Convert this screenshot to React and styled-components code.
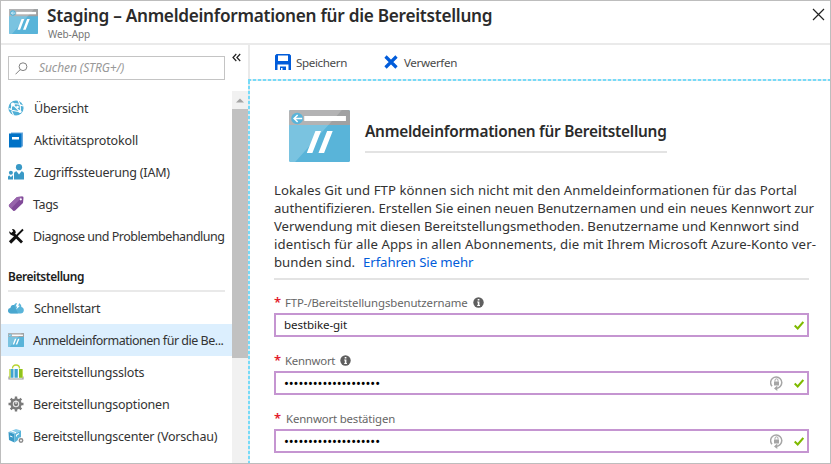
import React from 'react';
import styled, { createGlobalStyle, css } from 'styled-components';

const GlobalStyle = createGlobalStyle`
  *, *::before, *::after { box-sizing: border-box; }
  body { margin: 0; background: #fff; overflow: hidden; }
`;

const Blade = styled.div`
  display: flex;
  flex-direction: column;
  width: 831px;
  height: 464px;
  overflow: hidden;
  border: 1px solid #bdbdbd;
  background: #fff;
  color: #333;
  font-family: "Noto Sans", "Open Sans", sans-serif;
`;

const Header = styled.header`
  display: flex;
  flex: none;
  height: 44px;
  padding: 8px 5px 0 8px;
  border-bottom: 2px solid #eaeaea;
  > svg { flex: none; }
`;

const HeaderText = styled.div`
  flex: 1;
  margin: -4px 0 0 9px;
`;

const Title = styled.h1`
  margin: 0;
  font-size: 17.2px;
  font-weight: 600;
  line-height: 22px;
  letter-spacing: -0.27px;
  color: #2b2b2b;
  white-space: nowrap;
`;

const Subtitle = styled.div`
  margin: 0 0 0 1px;
  font-size: 10px;
  line-height: 14px;
  letter-spacing: -0.1px;
  color: #757575;
`;

const CloseButton = styled.button`
  display: flex;
  align-self: flex-start;
  margin-top: -1px;
  padding: 0;
  border: 0;
  background: none;
`;

const Body = styled.div`
  display: flex;
  flex: 1;
  min-height: 0;
`;

const Sidebar = styled.nav`
  display: grid;
  flex: none;
  grid-template-columns: 231px 16px;
  grid-template-rows: 47px 1fr;
  width: 247px;
`;

const SearchBox = styled.div`
  display: flex;
  align-items: center;
  width: 217px;
  height: 24px;
  margin: 11px 0 0 7px;
  padding-left: 6px;
  border: 1.5px solid #c4c4c4;
  font-size: 12px;
  font-style: italic;
`;

const SearchText = styled.span`
  margin: -2px 0 0 11px;
  letter-spacing: -0.1px;
  color: #999;
`;

const Collapse = styled.button`
  display: flex;
  align-self: start;
  margin-top: 8px;
  padding: 0;
  border: 0;
  background: none;
`;

const Menu = styled.div`
  min-width: 0;
  overflow: hidden;
`;

const MenuItem = styled.div`
  display: flex;
  align-items: center;
  height: 32px;
  padding-left: 7px;
  background: ${(p) => (p.$active ? '#dceffe' : 'transparent')};
  > svg { flex: none; }
`;

const MenuLabel = styled.span`
  margin-left: ${(p) => p.$gap}px;
  font-size: 12.5px;
  letter-spacing: ${(p) => p.$track}px;
  color: #333;
  white-space: nowrap;
`;

const SectionTitle = styled.h2`
  width: 217px;
  height: 40px;
  margin: 0 0 0 7px;
  padding-top: 16px;
  border-bottom: 2px solid #e9e9e9;
  font-size: 11.9px;
  font-weight: 600;
  line-height: 16px;
  letter-spacing: -0.42px;
  color: #1c1c1c;
`;

const ScrollTrack = styled.div`
  display: flex;
  flex-direction: column;
  margin-top: -1px;
  background: #f1f1f1;
`;

const ScrollArrow = styled.div`
  display: flex;
  align-items: center;
  justify-content: center;
  height: 18px;
`;

const ScrollThumb = styled.div`
  height: 249px;
  background: #c1c1c1;
`;

const Main = styled.main`
  display: flex;
  flex: 1;
  flex-direction: column;
  min-width: 0;
`;

const Toolbar = styled.div`
  display: flex;
  flex: none;
  align-items: center;
  height: 34px;
  padding-left: 25px;
  border-left: 2px solid #eaeaea;
`;

const Command = styled.button`
  display: flex;
  align-items: center;
  gap: ${(p) => p.$gap}px;
  width: 109px;
  padding: 0;
  border: 0;
  background: none;
  color: #4a4a4a;
  font-family: inherit;
  font-size: 11.6px;
  letter-spacing: -0.36px;
`;

const dash = css`#76dbf8 0 3px, #dcebf1 3px 5px`;

const DottedTop = styled.div`
  flex: none;
  height: 2px;
  background: repeating-linear-gradient(90deg, ${dash});
`;

const Panel = styled.section`
  display: flex;
  flex: 1;
  min-height: 0;
`;

const DottedSide = styled.div`
  flex: none;
  width: 2px;
  background: repeating-linear-gradient(180deg, ${dash});
`;

const Content = styled.div`
  flex: none;
  width: 560px;
  padding: 29px 0 0 24px;
`;

const Hero = styled.div`
  display: flex;
  height: 52px;
  padding-left: 15px;
`;

const HeroTitle = styled.h2`
  width: 302px;
  height: 35px;
  margin: 8px 0 0 15px;
  border-bottom: 2px solid #e3e3e3;
  font-size: 15.4px;
  font-weight: 600;
  line-height: 27px;
  letter-spacing: -0.26px;
  color: #2b2b2b;
  white-space: nowrap;
`;

const Paragraph = styled.div`
  width: 535px;
  height: 118px;
  padding-top: 19px;
  border-bottom: 2px solid #e3e3e3;
`;

const Line = styled.div`
  height: 18px;
  font-size: 13.2px;
  line-height: 18px;
  letter-spacing: ${(p) => p.$track}px;
  white-space: pre;
`;

const Link = styled.a`
  margin-left: 8px;
  letter-spacing: -0.1px;
  color: #015cda;
`;

const Form = styled.form`
  margin-top: 11px;
`;

const Field = styled.div`
  width: 535px;
  height: 58px;
`;

const FieldLabel = styled.div`
  display: flex;
  align-items: center;
  height: 22px;
  font-size: 11.4px;
  letter-spacing: ${(p) => p.$track}px;
  color: #666;
  > svg { margin: 1px 0 0 5px; }
`;

const Required = styled.span`
  width: ${(p) => p.$width}px;
  height: 19px;
  font-size: 13px;
  font-weight: 600;
  line-height: 19px;
  color: #e3192c;
`;

const Input = styled.div`
  display: flex;
  align-items: center;
  height: 24px;
  padding: 0 3px 0 8px;
  border: 2px solid #c595d1;
  font-size: 11.6px;
  letter-spacing: -0.1px;
  color: #222;
`;

const Value = styled.span`
  flex: 1;
  margin-top: -2px;
`;

const Password = styled(Value)`
  margin-top: 0;
  font-size: 13px;
  letter-spacing: -0.09px;
  color: #000;
`;

const FieldIcons = styled.span`
  display: flex;
  align-items: center;
  gap: 11px;
`;

function WebAppIcon({ width, height }) {
  return (
    <svg width={width} height={height} viewBox="0 0 60 52" preserveAspectRatio="none">
      <rect width="60" height="52" rx="1.5" fill="#59b4d9" />
      <path d="M1.5 0h57A1.5 1.5 0 0 1 60 1.5V15H0V1.5A1.5 1.5 0 0 1 1.5 0z" fill="#a0a1a2" />
      <path d="M1.5 0H52L6 52H1.5A1.5 1.5 0 0 1 0 50.5V1.5A1.5 1.5 0 0 1 1.5 0z" fill="#fff" opacity=".2" />
      <rect x="15" y="6" width="41" height="5" fill="#fff" />
      <circle cx="8" cy="8.5" r="5.8" fill="#59b4d9" />
      <path d="M13 8.5H5M8.5 5L5 8.5 8.5 12" fill="none" stroke="#fff" strokeWidth="1.5" />
      <path d="M26 21h5.5L23 43h-5.5zM37.5 21H43l-8.5 22H29z" fill="#fff" />
    </svg>
  );
}

const Icon16 = ({ children }) => (
  <svg width="16" height="16" viewBox="0 0 16 16">{children}</svg>
);

const icons = {
  overview: (
    <Icon16>
      <circle cx="8" cy="8" r="7.6" fill="#4fafd6" />
      <path d="M4.8 4.5Q8.500 2.500 15 6M4.800 4.500L12 11.500Q6 12 1 8.500M4.800 4.500Q1.500 8 5.500 15M12 11.500Q13.500 6 10 .500" fill="none" stroke="#fff" strokeWidth="1.100" />
      <circle cx="4.800" cy="4.500" r="1.900" fill="#fff" />
      <circle cx="12" cy="11.500" r="1.600" fill="#fff" />
      <circle cx="9.500" cy="7" r="1.300" fill="#fff" />
    </Icon16>
  ),
  log: (
    <Icon16>
      <path d="M3 .5h12v14H3z" fill="#6ba9dc" />
      <path d="M1 1.500h12.500v14H1z" fill="#0072c6" />
      <path d="M4 5h7v2.500H4z" fill="#fff" />
    </Icon16>
  ),
  access: (
    <Icon16>
      <circle cx="11" cy="3.200" r="3.100" fill="#3999c6" />
      <path d="M6 15.500V9.500Q6 7.500 8.500 7.300L11 10.500l2.500-3.200Q16 7.500 16 9.500v6z" fill="#3999c6" />
      <circle cx="2.900" cy="8.800" r="2" fill="#3999c6" />
      <path d="M0 15.500V13q0-1.500 1.500-1.500l1.400 1.700 1.400-1.700H5v4z" fill="#3999c6" />
    </Icon16>
  ),
  tag: (
    <Icon16>
      <path d="M9 1l5.500-.5Q15.500.500 15.500 1.800L15 7 7.200 14.600Q6 15.600 5 14.500L1 10.500Q.500 9.500 1.300 8.500z" fill="#804998" />
      <path d="M9 1l5.500-.5L3.200 12.500 1 10.500Q.500 9.500 1.300 8.500z" fill="#9764ab" />
      <circle cx="12.800" cy="3.300" r="1.100" fill="#fff" />
    </Icon16>
  ),
  tools: (
    <Icon16>
      <path d="M4 4.500L14 14.500" stroke="#111" strokeWidth="2.800" />
      <path d="M1.100 3.300L3.500 5 5.200 3.600 4 1Q7.400.700 7.800 4.700L5 7.700Q1.300 7 1.100 3.300z" fill="#111" />
      <path d="M15 1.500L8 8.500" stroke="#111" strokeWidth="1.800" />
      <path d="M7.700 8.800L2 14.500" stroke="#111" strokeWidth="3.200" />
    </Icon16>
  ),
  quick: (
    <Icon16>
      <path d="M3 13.500Q0 13.200 0 10.500 0 8.200 2.500 8 3 4.500 6 5 7.200 2.500 10 3q3.200.300 3.400 4Q16 7.500 15.800 10.500 15.500 13.500 12.500 13.500z" fill="#59b4d9" />
      <path d="M2.500 8Q3 4.500 6 5l4 8.500H3Q0 13.200 0 10.500 0 8.200 2.500 8z" fill="#3999c6" opacity=".5" />
      <path d="M9 3h2.300L10.200 5.700h1.800L8.200 9.500l1-3H7.800z" fill="#fff" />
    </Icon16>
  ),
  credentials: <WebAppIcon width={16} height={14} />,
  slots: (
    <Icon16>
      <path d="M1 12.500V15h14v-2.500" fill="none" stroke="#9a9b9c" strokeWidth="1.200" />
      <path d="M2.500 5h3v8.800h-3zM6.500 5h3.300v8.800H6.500z" fill="#3fa4d1" />
      <path d="M11 5h3v8.800h-3z" fill="#8fc31f" />
      <path d="M4.500 4.500Q4.500 1 8 1t3.500 3.500" fill="none" stroke="#b8d432" strokeWidth="1.300" />
      <path d="M1.300 5h1.200v8.800H1.300zM14 5h.8v8.800H14z" fill="#b8d432" />
    </Icon16>
  ),
  options: (
    <Icon16>
      <g fill="#7a7a7a">
        <circle cx="8" cy="8" r="5.700" />
        <path d="M6.800.5h2.400v15H6.800zM.5 6.800h15v2.400H.5z" />
        <path d="M6.800.5h2.400v15H6.800zM.5 6.800h15v2.400H.5z" transform="rotate(45 8 8)" />
      </g>
      <circle cx="8" cy="8" r="2.700" fill="none" stroke="#e6e6e6" strokeWidth="1.100" />
      <path d="M8 4.500V8" stroke="#fff" strokeWidth="1" />
    </Icon16>
  ),
  center: (
    <Icon16>
      <path d="M.5 4L8 1l5 1.500-6.500 3.500z" fill="#8accea" />
      <path d="M.5 4l6 2v8.500L1 12z" fill="#3999c6" />
      <path d="M6.500 6L13 2.500V10l-6.500 4.500z" fill="#59b4d9" />
      <path d="M3 2.800L8 4.700M2 8l2.500 1" stroke="#fff" strokeWidth="1" />
      <path d="M8.500 8.500V7L11 5.500" stroke="#fff" strokeWidth="1.100" fill="none" />
      <circle cx="13" cy="12.500" r="3.200" fill="#fff" />
      <circle cx="13" cy="12.500" r="1.700" fill="none" stroke="#8b8b8b" strokeWidth="1.500" />
    </Icon16>
  ),
};

const topItems = [
  { icon: 'overview', label: 'Übersicht', gap: 10, track: -0.25 },
  { icon: 'log', label: 'Aktivitätsprotokoll', gap: 10, track: -0.15 },
  { icon: 'access', label: 'Zugriffssteuerung (IAM)', gap: 10, track: -0.2 },
  { icon: 'tag', label: 'Tags', gap: 9, track: -0.38 },
  { icon: 'tools', label: 'Diagnose und Problembehandlung', gap: 9, track: -0.48 },
];

const deployItems = [
  { icon: 'quick', label: 'Schnellstart', gap: 10, track: -0.23 },
  { icon: 'credentials', label: 'Anmeldeinformationen für die Be...', gap: 9, track: -0.49, active: true },
  { icon: 'slots', label: 'Bereitstellungsslots', gap: 9, track: -0.2 },
  { icon: 'options', label: 'Bereitstellungsoptionen', gap: 9, track: -0.2 },
  { icon: 'center', label: 'Bereitstellungscenter (Vorschau)', gap: 9, track: -0.2 },
];

const lines = [
  ['Lokales Git und FTP können sich nicht mit den Anmeldeinformationen für das Portal', 0.045],
  ['authentifizieren. Erstellen Sie einen neuen Benutzernamen und ein neues Kennwort zur', -0.026],
  ['Verwendung mit diesen Bereitstellungsmethoden. Benutzername und Kennwort sind', -0.031],
  ['identisch für alle Apps in allen Abonnements, die mit Ihrem Microsoft Azure-Konto ver-', 0.069],
];

const Check = () => (
  <svg width="10" height="9" viewBox="0 0 10 9">
    <path d="M.7 4.500L3.700 7.500 9.300 1" fill="none" stroke="#7fba00" strokeWidth="2" />
  </svg>
);

const LockReset = () => (
  <svg width="13" height="16" viewBox="0 0 13 16">
    <path d="M2 11.300A5.600 5.600 0 1 1 10.200 11.500Q8.800 13.300 5.500 13.400" fill="none" stroke="#a6a6a6" strokeWidth="1.500" />
    <path d="M7.300 10.600L4 13.400 7.300 16z" fill="#a6a6a6" />
    <path d="M4 6.500h5v4H4z" fill="#a6a6a6" />
    <path d="M5 6.500V5.300a1.500 1.500 0 0 1 3 0v1.200" fill="none" stroke="#a6a6a6" />
  </svg>
);

const Info = () => (
  <svg width="11" height="11" viewBox="0 0 11 11">
    <circle cx="5.500" cy="5.500" r="5.200" fill="#5f5f5f" />
    <path d="M4.700 2h1.700v1.500H4.700zM4.200 4.500h2.200v3.500H7V9H4.200V8h.6V5.500h-.6z" fill="#fff" />
  </svg>
);

function Item({ item }) {
  return (
    <MenuItem $active={item.active}>
      {icons[item.icon]}
      <MenuLabel $gap={item.gap} $track={item.track}>{item.label}</MenuLabel>
    </MenuItem>
  );
}

function FormField({ label, track, offset = 11, info, secret, children }) {
  return (
    <Field>
      <FieldLabel $track={track}>
        <Required $width={offset}>*</Required>
        {label}
        {info && <Info />}
      </FieldLabel>
      <Input>
        {secret ? <Password>{'•'.repeat(20)}</Password> : <Value>{children}</Value>}
        <FieldIcons>
          {secret && <LockReset />}
          <Check />
        </FieldIcons>
      </Input>
    </Field>
  );
}

export default function App() {
  return (
    <Blade>
      <GlobalStyle />
      <Header>
        <WebAppIcon width={29} height={25} />
        <HeaderText>
          <Title>Staging – Anmeldeinformationen für die Bereitstellung</Title>
          <Subtitle>Web-App</Subtitle>
        </HeaderText>
        <CloseButton aria-label="Schließen">
          <svg width="13" height="13" viewBox="0 0 13 13">
            <path d="M1 1l11 11M12 1L1 12" stroke="#222" strokeWidth="1.200" />
          </svg>
        </CloseButton>
      </Header>
      <Body>
        <Sidebar>
          <SearchBox>
            <svg width="13" height="13" viewBox="0 0 13 13" fill="none" stroke="#808080">
              <circle cx="8" cy="4.700" r="3.900" />
              <path d="M5.200 7.600L.5 12.300" />
            </svg>
            <SearchText>Suchen (STRG+/)</SearchText>
          </SearchBox>
          <Collapse aria-label="Einklappen">
            <svg width="9" height="9" viewBox="0 0 9 9">
              <path d="M4.300 1L1 4.500 4.300 8M8.200 1L4.900 4.500 8.200 8" fill="none" stroke="#222" strokeWidth="1.200" />
            </svg>
          </Collapse>
          <Menu>
            {topItems.map((item) => <Item key={item.label} item={item} />)}
            <SectionTitle>Bereitstellung</SectionTitle>
            {deployItems.map((item) => <Item key={item.label} item={item} />)}
          </Menu>
          <ScrollTrack>
            <ScrollArrow>
              <svg width="8" height="5" viewBox="0 0 8 5"><path d="M4 .5L8 4.500H0z" fill="#a3a3a3" /></svg>
            </ScrollArrow>
            <ScrollThumb />
          </ScrollTrack>
        </Sidebar>
        <Main>
          <Toolbar>
            <Command $gap={5}>
              <svg width="16" height="16" viewBox="0 0 16 16">
                <path fillRule="evenodd" d="M1.500 0h13L16 1.500V16h-2.500v-5.500h-11V16H0V1.500zM3 1.500v5.500h10V1.500zM5 12.500h6V16H7.500v-2H6v2H5z" fill="#015cda" />
              </svg>
              Speichern
            </Command>
            <Command $gap={6}>
              <svg width="14" height="14" viewBox="0 0 14 14">
                <path d="M1.500 1.500l11 11M12.500 1.500l-11 11" stroke="#015cda" strokeWidth="3.200" />
              </svg>
              Verwerfen
            </Command>
          </Toolbar>
          <DottedTop />
          <Panel>
            <DottedSide />
            <Content>
              <Hero>
                <WebAppIcon width={61} height={52} />
                <HeroTitle>Anmeldeinformationen für Bereitstellung</HeroTitle>
              </Hero>
              <Paragraph>
                {lines.map(([text, track]) => <Line key={text} $track={track}>{text}</Line>)}
                <Line $track={0}>bunden sind.<Link>Erfahren Sie mehr</Link></Line>
              </Paragraph>
              <Form>
                <FormField label="FTP-/Bereitstellungsbenutzername" track={-0.1} info>bestbike-git</FormField>
                <FormField label="Kennwort" track={-0.25} info secret />
                <FormField label="Kennwort bestätigen" track={-0.16} offset={12} secret />
              </Form>
            </Content>
          </Panel>
        </Main>
      </Body>
    </Blade>
  );
}
